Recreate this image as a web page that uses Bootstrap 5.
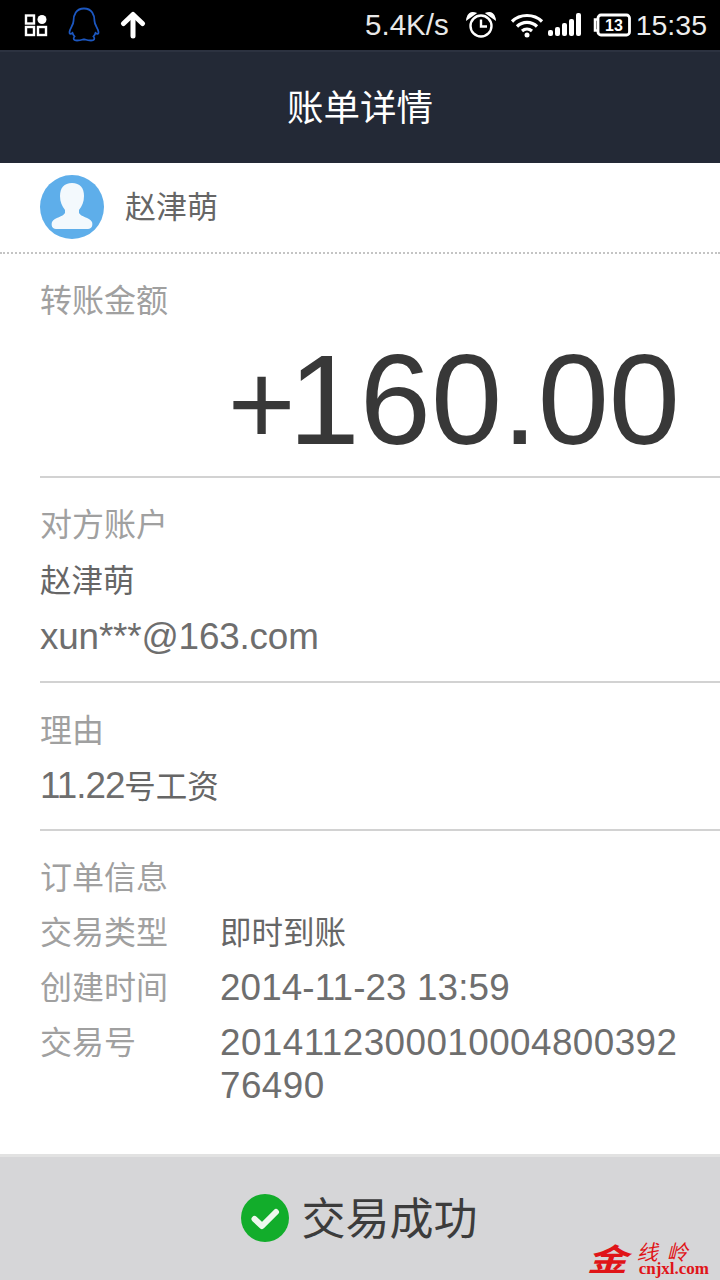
<!DOCTYPE html>
<html lang="zh-CN">

<head>
    <title>账单详情</title>
    <meta charset="UTF-8">
    <meta name="viewport" content="width=device-width, initial-scale=1.0">
    <link href="https://cdn.jsdelivr.net/npm/bootstrap@5.3.0/dist/css/bootstrap.min.css" rel="stylesheet">
    <style>
        html, body {
            margin: 0;
            height: 1280px;
            overflow: hidden;
        }

        body {
            width: 720px;
            position: relative;
            font-family: "Liberation Sans", "Noto Sans CJK SC", sans-serif;
            background: #fff;
        }

        .status-bar {
            height: 50px;
            background: #000;
            color: #fff;
            padding: 0 13px 0 24px;
            font-size: 28px;
        }

        .status-speed { font-size: 29.500px; color: #e8e8e8; }
        .status-time { margin-left: 5px; font-size: 28.500px; color: #eee; }
        .status-left { margin-left: 19px; }
        .status-wifi { margin-left: 13px; }
        .status-battery { margin-left: 11px; }

        .title-bar {
            height: 113px;
            background: #232936;
            border-top: 2px solid #2c3240;
            color: #fff;
            font-size: 36.500px;
            padding-top: 3px;
        }

        .person-row {
            height: 91px;
            padding: 0 0 2px 40px;
            gap: 21px;
            color: #666;
            font-size: 31px;
            border-bottom: 2px dotted #c4c4c4;
        }

        .person-row span { margin-top: 3px; }

        .bill-block {
            margin-left: 40px;
            border-bottom: 2px solid #d2d2d2;
        }

        .bill-label { color: #a0a0a0; font-size: 32px; line-height: 40px; }
        .bill-value { color: #666; font-size: 31.500px; line-height: 40px; }
        .latin-value { color: #6e6e6e; font-size: 36.800px; }
        .mail-value { letter-spacing: -.15px; }
        .date-value { letter-spacing: .12px; }
        .reason-num { font-size: 36.800px; letter-spacing: -1px; color: #6e6e6e; }

        .amount-block { height: 224px; padding-top: 27px; }

        .amount-value {
            font-size: 128px;
            line-height: 130px;
            color: #383838;
            text-align: right;
            padding-right: 40px;
            margin-top: 14px;
        }

        .amount-sign { font-size: 116px; letter-spacing: -7px; }

        .other-block { height: 205px; padding-top: 27px; }
        .reason-block { height: 148px; padding-top: 28px; }
        .order-block { padding-top: 27px; border-bottom: 0; }

        .other-block .bill-value { margin-top: 16px; }
        .reason-block .bill-value { margin-top: 15px; }

        .info-row { display: flex; margin-top: 15px; }
        .info-key { width: 180px; flex: none; }
        .info-val { width: 460px; word-break: break-all; line-height: 43px; margin-top: -2px; letter-spacing: .45px; }

        .result-bar {
            position: absolute;
            left: 0;
            right: 0;
            bottom: 0;
            height: 126px;
            background: #d6d6d8;
            border-top: 3px solid #e2e2e2;
            color: #3c3c3c;
            font-size: 44px;
            gap: 13px;
            padding: 0 2px 1px 0;
        }

        .result-bar span { margin-top: 3px; }

        .watermark {
            position: absolute;
            right: 11px;
            bottom: 5px;
            gap: 12px;
            color: #e01418;
            font-family: "Noto Sans CJK SC", serif;
            line-height: 1;
        }

        .watermark-big { font-size: 31px; font-weight: 700; transform: skewX(-18deg) scaleX(1.300); }
        .watermark-cn { font-size: 21px; line-height: 22px; letter-spacing: 9px; margin-right: -9px; transform: skewX(-14deg); }
        .watermark-url { font-family: "Liberation Serif", serif; font-size: 17px; line-height: 13px; font-weight: 700; text-align: right; }
    </style>
</head>

<body>
    <div class="status-bar d-flex align-items-center">
        <svg width="24" height="24" viewBox="0 0 24 24" fill="none" stroke="#fff" stroke-width="2.400">
            <rect x="2" y="2.500" width="8" height="8" />
            <rect x="2" y="14" width="8" height="8" />
            <rect x="14" y="14" width="8" height="8" />
            <circle cx="18" cy="6.500" r="4.500" fill="#fff" stroke="none" />
        </svg>
        <svg class="status-left" width="34" height="36" viewBox="0 0 34 36" fill="none" stroke="#1c57c0" stroke-width="1.800">
            <path d="M17 1.500C9 1.500 6.500 8 6.500 14C6.500 18 3 21 2.500 25C2.300 27 3.500 27.500 5.500 26C6 27.500 6.500 28.500 7.500 29.500C5.500 32 7 33.500 10 33.500C12.500 33.500 14.500 33 16 32.500H18C19.500 33 21.500 33.500 24 33.500C27 33.500 28.500 32 26.500 29.500C27.500 28.500 28 27.500 28.500 26C30.500 27.500 31.700 27 31.500 25C31 21 27.500 18 27.500 14C27.500 8 25 1.500 17 1.500Z" />
        </svg>
        <svg class="status-left" width="26" height="28" viewBox="0 0 26 28" fill="none" stroke="#fff" stroke-width="5" stroke-linecap="round" stroke-linejoin="round">
            <path d="M13 25V4" />
            <path d="M3.500 12.500L13 3.500L22.500 12.500" />
        </svg>

        <span class="ms-auto status-speed">5.4K/s</span>
        <svg class="ms-3" width="32" height="30" viewBox="0 0 32 30" fill="none" stroke="#fff" stroke-width="2.400">
            <circle cx="16" cy="16" r="10.500" />
            <path d="M16 9.500V16.500H22" />
            <path d="M2.500 8.500C3 4.500 6 2.500 9.500 3.500Z" fill="#fff" />
            <path d="M29.500 8.500C29 4.500 26 2.500 22.500 3.500Z" fill="#fff" />
        </svg>
        <svg class="status-wifi" width="34" height="26" viewBox="0 0 34 26" fill="none" stroke="#fff" stroke-width="3.200">
            <path d="M2 9.500C10 1.500 24 1.500 32 9.500" />
            <path d="M7 14.500C12.500 9 21.500 9 27 14.500" />
            <path d="M12 19C15 16.500 19 16.500 22 19" />
            <circle cx="17" cy="23" r="2.500" fill="#fff" stroke="none" />
        </svg>
        <svg class="ms-1" width="34" height="24" viewBox="0 0 34 24" fill="#fff">
            <rect x="0" y="17" width="5" height="6" rx="2" />
            <rect x="7" y="14" width="5" height="9" rx="2" />
            <rect x="14" y="10" width="5" height="13" rx="2" />
            <rect x="21" y="6" width="5" height="17" rx="2" />
            <rect x="28" y="0" width="5" height="23" rx="2" />
        </svg>
        <svg class="status-battery" width="38" height="24" viewBox="0 0 38 24">
            <path d="M4 6.500H2V17.500H4" fill="none" stroke="#fff" stroke-width="2.500" />
            <rect x="5" y="2" width="31.500" height="20" rx="3" fill="none" stroke="#fff" stroke-width="2.800" />
            <text x="21" y="18" fill="#fff" font-size="16" font-weight="700" text-anchor="middle" font-family="Liberation Sans">13</text>
        </svg>
        <span class="status-time">15:35</span>
    </div>

    <div class="title-bar d-flex align-items-center justify-content-center">账单详情</div>

    <div class="person-row d-flex align-items-center">
        <svg width="64" height="64" viewBox="0 0 64 64">
            <circle cx="32" cy="32" r="32" fill="#5eaeea" />
            <path d="M32 8C24 8 20 13 20 21C20 27 22 31 25 35V38C23 42 15 42 12 47C11 50 12 54 16 54H48C52 54 53 50 52 47C49 42 41 42 39 38V35C42 31 44 27 44 21C44 13 40 8 32 8Z" fill="#f3f9fd" />
        </svg>
        <span>赵津萌</span>
    </div>

    <div class="bill-block amount-block">
        <div class="bill-label">转账金额</div>
        <div class="amount-value"><span class="amount-sign">+</span>160.00</div>
    </div>

    <div class="bill-block other-block">
        <div class="bill-label">对方账户</div>
        <div class="bill-value">赵津萌</div>
        <div class="bill-value latin-value mail-value">xun***@163.com</div>
    </div>

    <div class="bill-block reason-block">
        <div class="bill-label">理由</div>
        <div class="bill-value"><span class="reason-num">11.22</span>号工资</div>
    </div>

    <div class="bill-block order-block">
        <div class="bill-label">订单信息</div>
        <div class="info-row">
            <div class="bill-label info-key">交易类型</div>
            <div class="bill-value">即时到账</div>
        </div>
        <div class="info-row">
            <div class="bill-label info-key">创建时间</div>
            <div class="bill-value latin-value date-value">2014-11-23 13:59</div>
        </div>
        <div class="info-row">
            <div class="bill-label info-key">交易号</div>
            <div class="bill-value latin-value info-val">201411230001000480039276490</div>
        </div>
    </div>

    <div class="result-bar d-flex align-items-center justify-content-center">
        <svg width="48" height="48" viewBox="0 0 48 48">
            <circle cx="24" cy="24" r="24" fill="#12ad2b" />
            <path d="M13.500 25L21 32L35 18" fill="none" stroke="#eef8ee" stroke-width="6" stroke-linecap="round" stroke-linejoin="round" />
        </svg>
        <span>交易成功</span>
    </div>

    <div class="watermark d-flex align-items-center">
        <div class="watermark-big">金</div>
        <div>
            <div class="watermark-cn">线岭</div>
            <div class="watermark-url">cnjxl.com</div>
        </div>
    </div>
</body>

</html>
